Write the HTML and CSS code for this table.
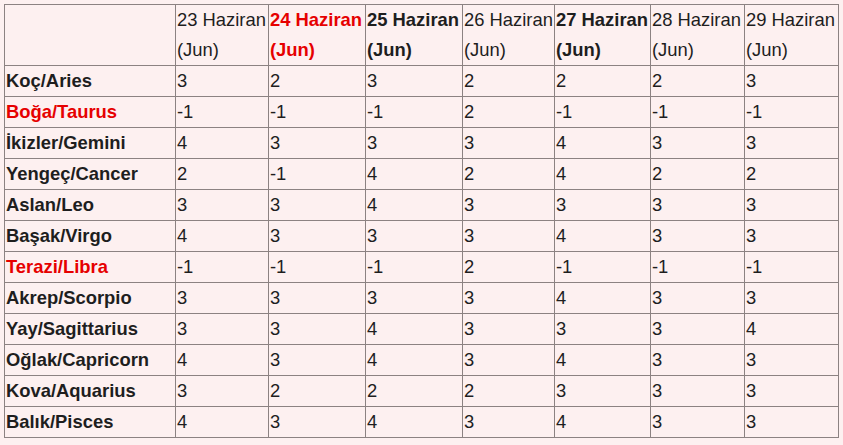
FILE: index.html
```html
<!DOCTYPE html>
<html lang="tr">
<head>
<meta charset="utf-8">
<title>Burç Tablosu</title>
<link rel="stylesheet" href="styles.css">
</head>
<body>
<table class="grid">
  <colgroup>
    <col class="c-sign">
    <col class="c-93">
    <col class="c-97">
    <col class="c-97">
    <col class="c-92">
    <col class="c-96">
    <col class="c-94">
    <col class="c-94">
  </colgroup>
  <thead>
    <tr>
      <th></th>
      <th>23 Haziran (Jun)</th>
      <th class="strong red">24 Haziran (Jun)</th>
      <th class="strong">25 Haziran (Jun)</th>
      <th>26 Haziran (Jun)</th>
      <th class="strong">27 Haziran (Jun)</th>
      <th>28 Haziran (Jun)</th>
      <th>29 Haziran (Jun)</th>
    </tr>
  </thead>
  <tbody>
    <tr><th>Koç/Aries</th><td>3</td><td>2</td><td>3</td><td>2</td><td>2</td><td>2</td><td>3</td></tr>
    <tr><th class="red">Boğa/Taurus</th><td>-1</td><td>-1</td><td>-1</td><td>2</td><td>-1</td><td>-1</td><td>-1</td></tr>
    <tr><th>İkizler/Gemini</th><td>4</td><td>3</td><td>3</td><td>3</td><td>4</td><td>3</td><td>3</td></tr>
    <tr><th>Yengeç/Cancer</th><td>2</td><td>-1</td><td>4</td><td>2</td><td>4</td><td>2</td><td>2</td></tr>
    <tr><th>Aslan/Leo</th><td>3</td><td>3</td><td>4</td><td>3</td><td>3</td><td>3</td><td>3</td></tr>
    <tr><th>Başak/Virgo</th><td>4</td><td>3</td><td>3</td><td>3</td><td>4</td><td>3</td><td>3</td></tr>
    <tr><th class="red">Terazi/Libra</th><td>-1</td><td>-1</td><td>-1</td><td>2</td><td>-1</td><td>-1</td><td>-1</td></tr>
    <tr><th>Akrep/Scorpio</th><td>3</td><td>3</td><td>3</td><td>3</td><td>4</td><td>3</td><td>3</td></tr>
    <tr><th>Yay/Sagittarius</th><td>3</td><td>3</td><td>4</td><td>3</td><td>3</td><td>3</td><td>4</td></tr>
    <tr><th>Oğlak/Capricorn</th><td>4</td><td>3</td><td>4</td><td>3</td><td>4</td><td>3</td><td>3</td></tr>
    <tr><th>Kova/Aquarius</th><td>3</td><td>2</td><td>2</td><td>2</td><td>3</td><td>3</td><td>3</td></tr>
    <tr><th>Balık/Pisces</th><td>4</td><td>3</td><td>4</td><td>3</td><td>4</td><td>3</td><td>3</td></tr>
  </tbody>
</table>
</body>
</html>
```
FILE: styles.css
```css
html, body {
  background: #fdf0f0;
}
body {
  margin: 4px;
  font-family: "Liberation Sans", Arial, sans-serif;
  font-size: 18.4px;
  color: #1e1e1e;
}
.grid {
  border-collapse: collapse;
  table-layout: fixed;
  width: 835px;
}
.grid th,
.grid td {
  border: 1px solid #8c8282;
  padding: 0 1px;
  line-height: 30px;
  text-align: left;
  vertical-align: top;
  font-weight: normal;
  white-space: normal;
  overflow: hidden;
}
.grid tbody th {
  font-weight: bold;
}
.grid .strong {
  font-weight: bold;
}
.grid .red {
  color: #e60000;
}
.c-sign { width: 171px; }
.c-92 { width: 92px; }
.c-93 { width: 93px; }
.c-94 { width: 94px; }
.c-96 { width: 96px; }
.c-97 { width: 97px; }
```
